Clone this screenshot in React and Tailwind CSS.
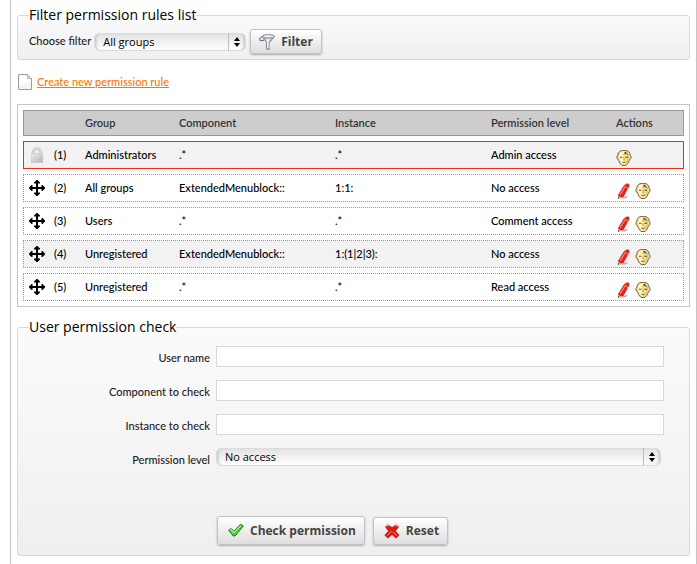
import React from "react";

const rules = [
  { id: 1, group: "Administrators", component: ".*", instance: ".*", level: "Admin access", locked: true },
  { id: 2, group: "All groups", component: "ExtendedMenublock::", instance: "1:1:", level: "No access" },
  { id: 3, group: "Users", component: ".*", instance: ".*", level: "Comment access" },
  { id: 4, group: "Unregistered", component: "ExtendedMenublock::", instance: "1:(1|2|3):", level: "No access" },
  { id: 5, group: "Unregistered", component: ".*", instance: ".*", level: "Read access" },
];

const columns =
  "grid grid-cols-[61px_94fr_156fr_156fr_125fr_67fr] items-center border";

function LockIcon() {
  return (
    <svg className="size-4" viewBox="0 0 16 16" aria-hidden="true">
      <defs>
        <linearGradient id="lock-body" x1="0" y1="0" x2="1" y2="1">
          <stop offset="0" stopColor="#eeeeee" />
          <stop offset="1" stopColor="#b4b4b4" />
        </linearGradient>
      </defs>
      <path d="M4.300 8V5.200a3.700 3.700 0 0 1 7.400 0V8" fill="none" stroke="#bdbdbd" strokeWidth="2.600" />
      <path d="M4.300 8V5.200a3.700 3.700 0 0 1 7.400 0V8" fill="none" stroke="#e6e6e6" strokeWidth="1.200" />
      <rect x="2.300" y="6.500" width="11.500" height="9.200" fill="url(#lock-body)" stroke="#c4c4c4" strokeWidth=".6" />
    </svg>
  );
}

function MoveIcon() {
  return (
    <svg className="size-4" viewBox="0 0 16 16" aria-hidden="true">
      <path
        d="M7.500 0h1l2.500 2.500v1H9V7h3.500V5h1L16 7.500v1L13.500 11h-1V9H9v3.500h2v1L8.500 16h-1L5 13.500v-1h2V9H3.500v2h-1L0 8.500v-1L2.500 5h1v2H7V3.500H5v-1z"
        fill="#000"
      />
    </svg>
  );
}

function PenIcon() {
  return (
    <svg className="size-4" viewBox="0 0 16 16" aria-hidden="true">
      <path d="M4 15.600L9.500 13.200l3 .4-3.500 2z" fill="#b0b0b0" />
      <path d="M2.200 15.600l.3-3.800 3.800 2z" fill="#e9cdb0" stroke="#9a7d68" strokeWidth=".4" />
      <path d="M2 15.800l.3-1.700 1.300.9z" fill="#222" />
      <path d="M2.300 12.200L7.500 3.400C8.700 1.500 10.800.5 12.200.8c1 .4 1.200 1.700.7 2.800L7.300 13.800C5.600 14.400 3.300 13.600 2.300 12.200z" fill="#e3221c" stroke="#b3130e" strokeWidth=".5" />
      <path d="M4.200 11.600L9.200 3.600" stroke="#ff8377" strokeWidth="1.200" fill="none" />
      <path d="M9.300 2.600l2.600 3.400" stroke="#f0a23c" strokeWidth="1" />
    </svg>
  );
}

function MaskIcon() {
  return (
    <svg className="size-4" viewBox="0 0 16 16" aria-hidden="true">
      <path
        d="M5 .6h6l2.600 2 .7 3.200.8.500-.3 2.500-1.200.7-1.400 3.500L10 15.500H6L3.800 13 2.400 9.500l-1.200-.7L.9 6.300l.8-.5.7-3.200z"
        fill="#f5e093"
        stroke="#6b5a35"
        strokeWidth=".9"
      />
      <path d="M5.200 1.500h3L7 6.500l.6 3.500-1 4L4.600 12 3.400 8.500 3.200 4z" fill="#fdf6cf" />
      <path d="M11.800 3l1.400 3-1 4-2.200 4-.8-.3 1.800-4z" fill="#e2c763" />
      <path d="M8.500 2.200h2v1.500h-2z" fill="#222" />
      <path d="M10.500 3.500h1.500v1.300h-1.500z" fill="#3f6f9d" />
      <path d="M7 4h2.500v1H7z" fill="#f2c200" />
      <path d="M4 7.200h2.300M9.300 7.200h2.700" stroke="#5a4a26" strokeWidth="1.100" />
      <path d="M7.800 7.500v2.300h1" stroke="#b3913c" strokeWidth=".8" fill="none" />
      <path d="M6.300 12.300h3.300" stroke="#7c5a28" strokeWidth=".9" />
    </svg>
  );
}

function PageIcon() {
  return (
    <svg className="h-4 w-[14px]" viewBox="0 0 14 16" aria-hidden="true">
      <path d="M.5.500h9l4 4v11H.5z" fill="#f3f3f3" stroke="#9b9b9b" strokeLinejoin="round" />
      <path d="M1.500 1.500h7.500v3.500h3.500v3l-11 4z" fill="#fff" />
      <path d="M9.500.500v4h4z" fill="#e2e2e2" stroke="#a8a8a8" strokeWidth=".8" strokeLinejoin="round" />
    </svg>
  );
}

function FunnelIcon() {
  return (
    <svg className="size-4" viewBox="0 0 16 16" aria-hidden="true">
      <path d="M3.500 2.500L7.500 8.500V15l2.500.500V9L15.500 2.500z" fill="#d3d3da" stroke="#777783" strokeWidth=".9" strokeLinejoin="round" />
      <ellipse cx="9.500" cy="2.300" rx="6" ry="1.700" fill="#f2f2f5" stroke="#777783" strokeWidth=".9" />
      <path d="M8.800 5v9" stroke="#fff" strokeWidth="1.200" />
      <path d="M10.500 8.300L13.500 4.200" stroke="#9c9ca8" strokeWidth="1.200" />
      <path d="M4 2.300C1.800 3 .4 5 .8 6c.6 1 3 .8 4.400-.2" fill="none" stroke="#777783" strokeWidth="1.200" />
    </svg>
  );
}

function CheckIcon() {
  return (
    <svg className="size-4" viewBox="0 0 16 16" aria-hidden="true">
      <path
        d="M.6 7.300L3.200 5.400l2.600 2.800L12.600 1.200l2.800 1.800L7 13h-1.800z"
        fill="#4fc83f"
        stroke="#2b7a26"
        strokeWidth="1"
        strokeLinejoin="round"
      />
      <path d="M2 7.400l1.100-.8 2.800 3 6.800-7" fill="none" stroke="#a8f296" strokeWidth="1.100" />
    </svg>
  );
}

function CrossIcon() {
  return (
    <svg className="size-4" viewBox="0 0 16 16" aria-hidden="true">
      <path
        d="M1.200 3.500L4 1.200l4 3.600 4-3.600 2.800 2.300L11.300 8l3.800 4.200-2.900 2.800L8 11.500 3.800 15 .9 12.200 4.700 8z"
        fill="#dd1b10"
        stroke="#96160f"
        strokeWidth=".8"
        strokeLinejoin="round"
      />
      <path d="M1.400 3.400L4 1.300l1.500 1.400M10.500 2.700L12 1.300l2.600 2.100" fill="none" stroke="#f3c6c3" strokeWidth="1.300" />
      <path d="M3 12.500l4.500-4.300M9 9l4 3.800" stroke="#ff5a48" strokeWidth="1.200" />
    </svg>
  );
}

function Select({ id, options, className }) {
  return (
    <div className={"relative h-[18px] " + className}>
      <select
        id={id}
        className="block h-full w-full appearance-none rounded-[5px] border border-[#dcdcdc] bg-linear-to-b from-[#e3e3e3] to-white pr-5 pl-2 font-['Open_Sans',sans-serif] text-[11px] leading-4 text-black shadow-[inset_3px_0_3px_-2px_#bbb,inset_-3px_0_3px_-2px_#bbb]"
      >
        {options.map((option) => (
          <option key={option}>{option}</option>
        ))}
      </select>
      <span className="pointer-events-none absolute inset-y-0 right-0 flex w-[18px] items-center border-l border-[#bcbcbc] pl-[5px]">
        <svg className="h-[10px] w-[6px]" viewBox="0 0 6 10" aria-hidden="true">
          <path d="M3 0l3 4H0zM3 10L0 6h6z" fill="#000" />
        </svg>
      </span>
    </div>
  );
}

function Button({ icon, children, type = "button", className }) {
  return (
    <button
      type={type}
      className={
        "flex items-center gap-[6px] rounded-[3px] border border-[#c3c3c3] bg-linear-to-b from-white to-[#dedede] pr-2 font-['Open_Sans',sans-serif] text-[12px] font-bold text-[#444] shadow-[0_1px_2px_#aaa] " +
        className
      }
    >
      {icon}
      {children}
    </button>
  );
}

function Panel({ title, className, children }) {
  return (
    <fieldset
      className={
        "min-w-0 rounded-[3px] border border-[#d9d9d9] bg-linear-to-b from-[#fbfbfb] to-[#efefef] px-[11px] " +
        className
      }
    >
      <legend className="font-['Open_Sans',sans-serif] text-[14px] leading-5 text-black">{title}</legend>
      {children}
    </fieldset>
  );
}

function FieldRow({ id, label, children }) {
  return (
    <div className="flex h-[34px] items-start gap-[6px]">
      <label htmlFor={id} className="w-[181px] shrink-0 text-right leading-6">
        {label}
      </label>
      {children}
    </div>
  );
}

function TextRow({ id, label }) {
  return (
    <FieldRow id={id} label={label}>
      <input id={id} type="text" className="h-[21px] min-w-0 flex-1 border border-[#d9d9d9] bg-white px-1" />
    </FieldRow>
  );
}

export default function App() {
  return (
    <div className="min-h-screen bg-white pl-[10px]">
      <main className="min-h-screen border-x border-[#c6c6c6] px-[6px] pt-[5px] font-['Lato','Liberation_Sans',sans-serif] text-[11px] font-medium text-[#222]">
        <Panel title="Filter permission rules list" className="pb-[5px]">
          <div className="flex items-center pt-1">
            <label htmlFor="filter-group">Choose filter</label>
            <Select id="filter-group" options={["All groups"]} className="ml-[3px] w-[152px]" />
            <Button icon={<FunnelIcon />} className="ml-1 h-[25px] pl-2">
              Filter
            </Button>
          </div>
        </Panel>

        <div className="mt-[14px] flex h-4 items-center gap-[5px] pl-[1px]">
          <PageIcon />
          <a href="#new" className="text-[#f57900] underline">
            Create new permission rule
          </a>
        </div>

        <div className="mt-[14px] border border-[#c6c6c6] p-[5px]">
          <table className="block text-black">
            <thead className="block">
              <tr className={columns + " h-[26px] border-[#999] bg-[#cdcdcd] text-left text-[#333]"}>
                <th aria-label="Order" />
                <th className="font-semibold">Group</th>
                <th className="font-semibold">Component</th>
                <th className="font-semibold">Instance</th>
                <th className="font-semibold">Permission level</th>
                <th className="font-semibold">Actions</th>
              </tr>
            </thead>
            <tbody className="mt-[5px] flex flex-col gap-[5px]">
              {rules.map((rule) => (
                <tr
                  key={rule.id}
                  className={
                    columns +
                    " h-[28px] " +
                    (rule.locked
                      ? "border-[#f52a0a] bg-[#f2f2f2]"
                      : rule.id === 4
                        ? "border-dotted border-[#999] bg-[#f2f2f2]"
                        : "border-dotted border-[#999] bg-white")
                  }
                >
                  <td className="flex items-center gap-[9px] pl-[5px]">
                    {rule.locked ? <LockIcon /> : <MoveIcon />}
                    <span>({rule.id})</span>
                  </td>
                  <td>{rule.group}</td>
                  <td>{rule.component}</td>
                  <td>{rule.instance}</td>
                  <td>{rule.level}</td>
                  <td className="flex items-center gap-[3px] pt-[5px]">
                    {!rule.locked && (
                      <a href="#edit" aria-label="Edit rule">
                        <PenIcon />
                      </a>
                    )}
                    <a href="#test" aria-label="Check rule">
                      <MaskIcon />
                    </a>
                  </td>
                </tr>
              ))}
            </tbody>
          </table>
        </div>

        <Panel title="User permission check" className="mt-[10px] pb-[10px]">
          <form className="pt-[9px] pr-[14px]">
            <TextRow id="user-name" label="User name" />
            <TextRow id="component" label="Component to check" />
            <TextRow id="instance" label="Instance to check" />
            <FieldRow id="level" label="Permission level">
              <Select id="level" options={["No access"]} className="mr-[3px] flex-1" />
            </FieldRow>
            <div className="mt-[34px] flex items-end gap-2 pl-[188px]">
              <Button icon={<CheckIcon />} type="submit" className="h-[29px] pl-[10px]">
                Check permission
              </Button>
              <Button icon={<CrossIcon />} type="reset" className="h-[28px] pl-[10px]">
                Reset
              </Button>
            </div>
          </form>
        </Panel>
      </main>
    </div>
  );
}
